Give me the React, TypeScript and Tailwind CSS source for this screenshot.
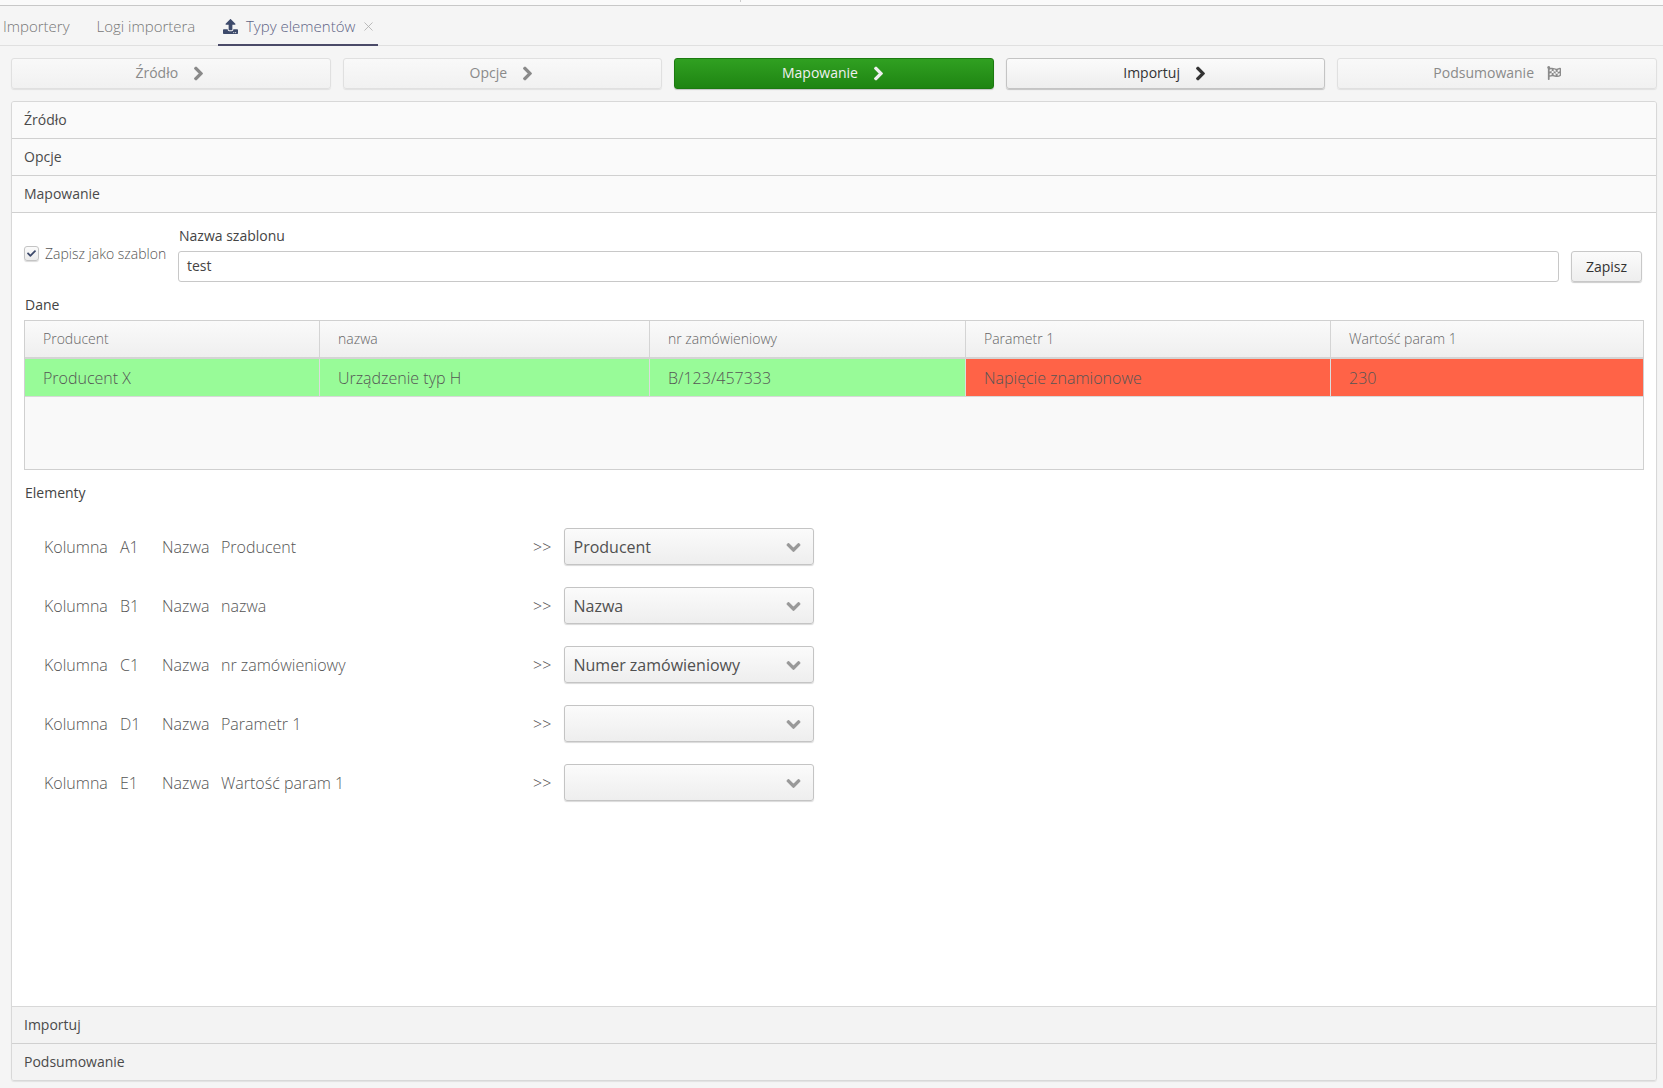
import { FaChevronRight, FaChevronDown, FaFlagCheckered, FaUpload, FaCheck } from "react-icons/fa";
import { X } from "lucide-react";

const font = { fontFamily: '"Open Sans", sans-serif' };

function Step({ label, kind, icon }: { label: string; kind: "off" | "green" | "on" | "last"; icon?: "flag" }) {
  const cls =
    kind === "green"
      ? "border-[#1c7a10] bg-gradient-to-b from-[#30a021] to-[#1f8512] text-[#f0f0f0] shadow-[0_1px_1px_rgba(0,0,0,0.2)]"
      : kind === "on"
        ? "border-[#c4c4c4] bg-gradient-to-b from-[#fbfbfb] to-[#eeeeee] text-[#333] shadow-[0_1px_1px_rgba(0,0,0,0.2)]"
        : "border-[#e0e0e0] bg-gradient-to-b from-[#f9f9f9] to-[#f1f1f1] text-[#8a8a8a] shadow-[0_1px_1px_rgba(0,0,0,0.08)]";
  return (
    <div className={`flex h-[31px] flex-1 items-center justify-center rounded-[3px] border pb-[2px] text-[14px] ${cls}`}>
      <span>{label}</span>
      {icon === "flag" ? (
        <FaFlagCheckered className="ml-[13px] text-[14px] text-[#8a8a8a]" />
      ) : (
        <FaChevronRight className="ml-[13px] mt-[2px] text-[15px]" stroke="currentColor" strokeWidth={36} />
      )}
    </div>
  );
}

function AccHeader({ label, dim }: { label: string; dim?: boolean }) {
  return (
    <div
      className={`flex h-[37px] items-center border-b border-[#d0d0d0] pb-[2px] pl-[12px] text-[14px] text-[#4a4a4a] last:h-[36px] last:border-b-0 ${
        dim ? "bg-[#f3f3f3]" : "bg-[#fafafa]"
      }`}
    >
      {label}
    </div>
  );
}

function MapRow({ col, name, value }: { col: string; name: string; value: string }) {
  return (
    <div className="flex h-[37px] items-center text-[16px] font-light text-[#555]">
      <span className="w-[76px]">Kolumna</span>
      <span className="w-[42px]">{col}</span>
      <span className="w-[59px]">Nazwa</span>
      <span className="w-[312px]">{name}</span>
      <span className="w-[30.5px] text-[16px]">&gt;&gt;</span>
      <div className="flex h-[37px] w-[250px] items-center justify-between rounded-[3px] border border-[#c4c4c4] bg-gradient-to-b from-[#fbfbfb] to-[#eeeeee] pl-[9px] pr-[12px] font-normal text-[#505050] shadow-[0_1px_1px_rgba(0,0,0,0.15)]">
        <span>{value}</span>
        <FaChevronDown className="mt-[2px] text-[15px] text-[#999]" stroke="currentColor" strokeWidth={36} />
      </div>
    </div>
  );
}

const cols = [
  { h: "Producent", v: "Producent X", red: false, w: "w-[295px]" },
  { h: "nazwa", v: "Urządzenie typ H", red: false, w: "w-[330px]" },
  { h: "nr zamówieniowy", v: "B/123/457333", red: false, w: "w-[316px]" },
  { h: "Parametr 1", v: "Napięcie znamionowe", red: true, w: "w-[365px]" },
  { h: "Wartość param 1", v: "230", red: true, w: "flex-1" },
];

export default function App() {
  return (
    <div style={font} className="flex h-[1088px] w-[1663px] flex-col overflow-hidden bg-[#f5f5f5] text-[14px]">
      <div className="relative h-[6px] border-b border-[#c8c8c8] bg-[#fafafa]">
        <span className="absolute left-[740px] top-0 h-[2px] w-px bg-[#cccccc]" />
      </div>
      <div className="flex h-[40px] items-end border-b border-[#e0e0e0] text-[15px] font-light text-[#777]">
        <div className="flex h-[38px] w-[96.5px] items-center pl-[3px]">Importery</div>
        <div className="flex h-[38px] w-[121.5px] items-center">Logi importera</div>
        <div className="-mb-px flex h-[38px] w-[160px] items-center whitespace-nowrap border-b-[2px] border-[#4a4a68] pl-[5px]">
          <FaUpload className="shrink-0 text-[15px] text-[#3d4a6b]" />
          <span className="ml-[8px] text-[#5f6485]">Typy elementów</span>
          <X className="ml-[6px] size-[15px] shrink-0 text-[#aaa]" strokeWidth={1.25} />
        </div>
      </div>

      <div className="flex flex-1 flex-col pb-[7px] pl-[11px] pr-[6px] pt-[12px]">
        <div className="flex gap-[12px]">
          <Step label="Źródło" kind="off" />
          <Step label="Opcje" kind="off" />
          <Step label="Mapowanie" kind="green" />
          <Step label="Importuj" kind="on" />
          <Step label="Podsumowanie" kind="last" icon="flag" />
        </div>

        <div className="mt-[12px] flex flex-1 flex-col overflow-hidden rounded-[3px] border border-[#d8d8d8] shadow-[0_1px_1px_rgba(0,0,0,0.08)]">
          <AccHeader label="Źródło" />
          <AccHeader label="Opcje" />
          <AccHeader label="Mapowanie" />
          <div className="flex flex-1 flex-col bg-white pl-[12px] pr-[12px] pt-[13px]">
            <div className="mr-[2px] flex items-end">
              <label className="mb-[14px] flex h-[30px] w-[154px] items-center text-[14px] font-light text-[#555]">
                <span className="flex size-[15px] items-center justify-center rounded-[3px] border border-[#c4c4c4] bg-gradient-to-b from-[#fbfbfb] to-[#ececec] shadow-[0_1px_1px_rgba(0,0,0,0.15)]">
                  <FaCheck className="text-[9px] text-[#3d4a6b]" />
                </span>
                <span className="ml-[6px]">Zapisz jako szablon</span>
              </label>
              <div className="flex-1">
                <div className="mb-[6px] pl-px text-[14px] leading-[19px] text-[#444]">Nazwa szablonu</div>
                <div className="flex h-[31px] items-center rounded-[3px] border border-[#c8c8c8] bg-white pb-[2px] pl-[8px] text-[14px] text-[#444]">
                  test
                </div>
              </div>
              <div className="ml-[12px] flex h-[31px] w-[71px] items-center justify-center rounded-[3px] border border-[#c8c8c8] bg-gradient-to-b from-[#fbfbfb] to-[#eeeeee] text-[14px] text-[#333] shadow-[0_1px_1px_rgba(0,0,0,0.2)]">
                Zapisz
              </div>
            </div>

            <div className="ml-px mt-[13px] text-[14px] leading-[19px] text-[#444]">Dane</div>
            <div className="mt-[6px] flex h-[150px] flex-col border border-[#d0d0d0] bg-[#f9f9f9]">
              <div className="flex h-[38px] border-b-[2px] border-[#d4d4d4] bg-gradient-to-b from-[#fafafa] to-[#efefef] text-[14px] font-light text-[#666]">
                {cols.map((c, i) => (
                  <div key={c.h} className={`flex items-center pb-[2px] pl-[18px] ${c.w} ${i < 4 ? "border-r border-[#d4d4d4]" : ""}`}>
                    {c.h}
                  </div>
                ))}
              </div>
              <div className="flex h-[38px] border-b border-[#d8d8d8] text-[16px] font-light text-[#555]">
                {cols.map((c, i) => (
                  <div
                    key={c.h}
                    className={`flex items-center pl-[18px] ${c.w} ${c.red ? "bg-[#ff6347]" : "bg-[#98fb98]"} ${i < 4 ? "border-r border-[#dcdcdc]" : ""}`}
                  >
                    {c.v}
                  </div>
                ))}
              </div>
            </div>

            <div className="ml-px mt-[13px] text-[14px] leading-[19px] text-[#444]">Elementy</div>
            <div className="ml-[20px] mt-[26px] flex flex-col gap-[22px]">
              <MapRow col="A1" name="Producent" value="Producent" />
              <MapRow col="B1" name="nazwa" value="Nazwa" />
              <MapRow col="C1" name="nr zamówieniowy" value="Numer zamówieniowy" />
              <MapRow col="D1" name="Parametr 1" value="" />
              <MapRow col="E1" name="Wartość param 1" value="" />
            </div>
          </div>
          <div className="border-t border-[#d8d8d8]" />
          <AccHeader label="Importuj" dim />
          <AccHeader label="Podsumowanie" dim />
        </div>
      </div>
    </div>
  );
}
